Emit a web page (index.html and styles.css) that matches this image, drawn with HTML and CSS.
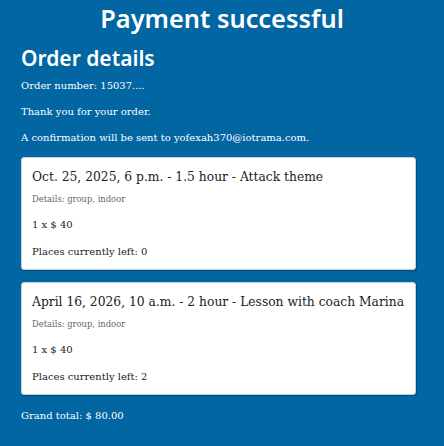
FILE: index.html
```html
<!DOCTYPE html>
<html>
<head>
<meta charset="utf-8">
<link rel="stylesheet" href="styles.css">
</head>
<body>
<main class="page">
  <h1 class="title">Payment successful</h1>
  <h2 class="subtitle">Order details</h2>
  <p class="text">Order number: 15037....</p>
  <p class="text">Thank you for your order.</p>
  <p class="text">A confirmation will be sent to yofexah370@iotrama.com.</p>
  <section class="card">
    <h3 class="card-title">Oct. 25, 2025, 6 p.m. - 1.5 hour - Attack theme</h3>
    <p class="card-details">Details: group, indoor</p>
    <p class="card-text">1 x $ 40</p>
    <p class="card-text">Places currently left: 0</p>
  </section>
  <section class="card">
    <h3 class="card-title">April 16, 2026, 10 a.m. - 2 hour - Lesson with coach Marina</h3>
    <p class="card-details">Details: group, indoor</p>
    <p class="card-text">1 x $ 40</p>
    <p class="card-text">Places currently left: 2</p>
  </section>
  <p class="text total">Grand total: $ 80.00</p>
</main>
</body>
</html>
```
FILE: styles.css
```css
html, body {
  margin: 0;
  padding: 0;
  background: #0266a3;
}
.page {
  padding: 0 28px 0 21px;
  color: #fff;
  font-family: "DejaVu Serif", serif;
}
.title {
  margin: 0 -28px 0 -21px;
  text-align: center;
  font-family: "Noto Sans", sans-serif;
  font-weight: 600;
  font-size: 25.4px;
  line-height: 36px;
}
.subtitle {
  margin: 8px 0 6px;
  font-family: "Noto Sans", sans-serif;
  font-weight: 600;
  font-size: 21px;
  line-height: 28px;
}
.text {
  margin: 0 0 11px;
  font-size: 10px;
  line-height: 15px;
}
.card {
  background: #fff;
  color: #222;
  border: 1px solid #c9ced3;
  border-radius: 3px;
  box-shadow: 1px 1px 1px rgba(0,0,0,0.25);
  padding: 10px 10px 10px;
  margin: 12px 0;
}
.card-title {
  margin: 0 0 7px;
  font-weight: normal;
  font-size: 12.3px;
  line-height: 18px;
}
.card-details {
  margin: 0 0 12px;
  font-size: 8.4px;
  line-height: 12px;
  color: #666;
}
.card-text {
  margin: 0 0 12px;
  font-size: 10px;
  line-height: 15px;
}
.card-text:last-child {
  margin-bottom: 0;
}
.total {
  margin-top: 13px;
}
```
